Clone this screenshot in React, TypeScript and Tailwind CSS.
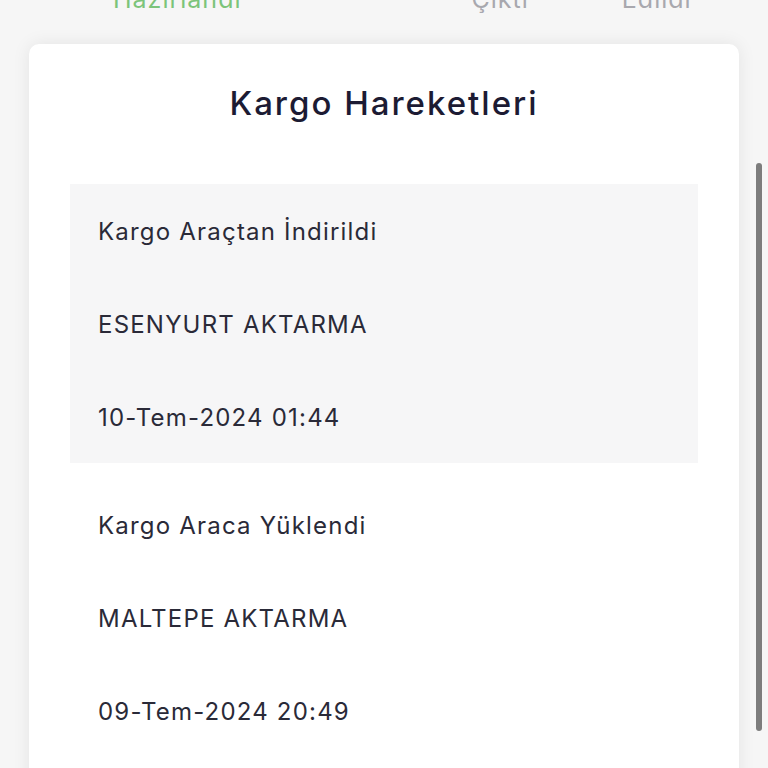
import React from "react";

type Movement = {
  status: string;
  location: string;
  date: string;
};

const movements: Movement[] = [
  { status: "Kargo Araçtan İndirildi", location: "ESENYURT AKTARMA", date: "10-Tem-2024 01:44" },
  { status: "Kargo Araca Yüklendi", location: "MALTEPE AKTARMA", date: "09-Tem-2024 20:49" },
];

const font = { fontFamily: "Inter, 'Noto Sans', sans-serif" };

export default function App() {
  return (
    <div className="relative h-[768px] w-[768px] overflow-hidden bg-[#f6f6f6]" style={font}>
      {/* step labels, mostly scrolled off the top */}
      <div className="relative -mt-[16px] flex h-[30px] items-end text-[25px] leading-[30px] tracking-[1px]">
        <span className="ml-[113px] text-[#7cc47a]">Hazırlandı</span>
        <span className="ml-[230px] text-[#a8a8ae]">Çıktı</span>
        <span className="ml-[93px] text-[#a8a8ae]">Edildi</span>
      </div>

      <div className="mx-[29px] mt-[30px] h-[760px] rounded-[10px] bg-white px-[41px] pt-[40px] shadow-[0_0_18px_rgba(0,0,0,0.08)]">
        <h2 className="text-center text-[33px] font-medium leading-[38px] tracking-[2px] text-[#1c1b33]">
          Kargo Hareketleri
        </h2>

        <div className="mt-[62px] flex flex-col">
          {movements.map((m, i) => (
            <div
              key={i}
              className={
                i === 0
                  ? "flex flex-col gap-[63px] bg-[#f6f6f7] pb-[30px] pl-[28px] pr-[28px] pt-[33px] text-[24px] leading-[30px] tracking-[1.2px] text-[#2a2a38]"
                  : "mt-[15px] flex flex-col gap-[63px] px-[28px] py-[33px] text-[24px] leading-[30px] tracking-[1.2px] text-[#2a2a38]"
              }
            >
              <p>{m.status}</p>
              <p>{m.location}</p>
              <p>{m.date}</p>
            </div>
          ))}
        </div>
      </div>

      {/* page scrollbar */}
      <div className="absolute left-[756px] top-[163px] h-[568px] w-[6px] rounded-full bg-[#7d7d7d]" />
    </div>
  );
}
